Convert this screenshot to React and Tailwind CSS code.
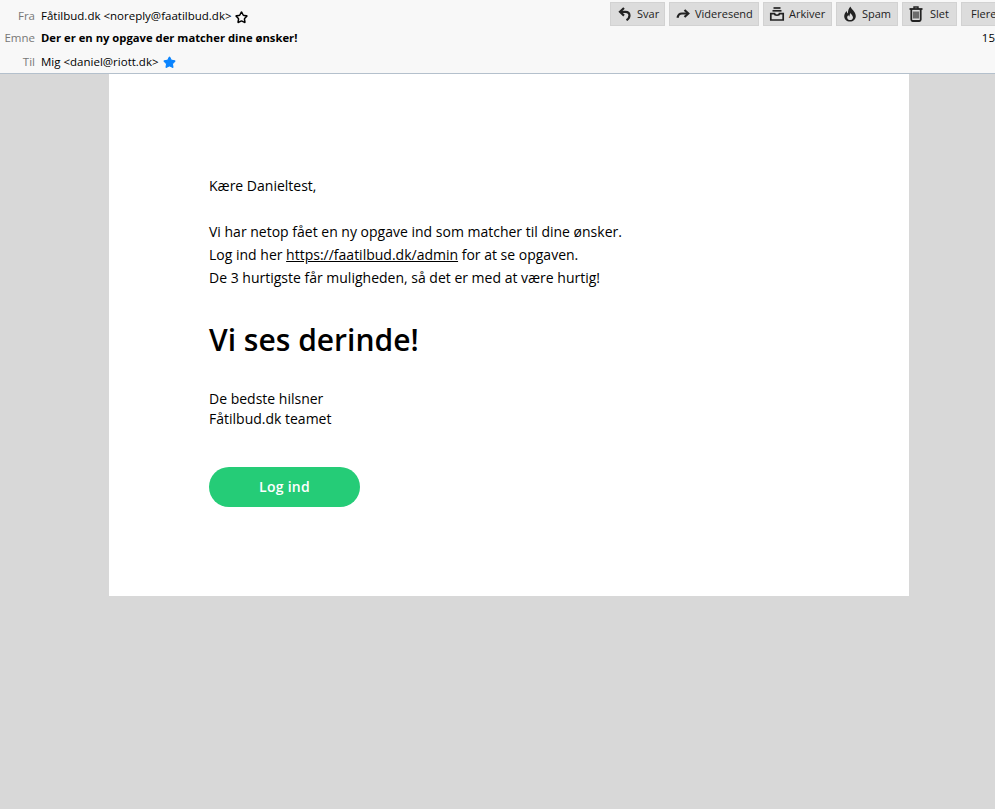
import React from 'react';
import { Star } from 'lucide-react';

function ReplyIcon() {
  return (
    <svg width="14" height="14" viewBox="0 0 14 14" fill="none" stroke="#222" strokeWidth="2.2">
      <path d="M6 1 L2 4.8 L6 8.6" />
      <path d="M2.5 4.8 H7.5 C10.5 4.8 11.5 6.8 11.5 8.6 C11.5 10.4 10.5 12 8.5 13.2" />
    </svg>
  );
}

function ForwardIcon() {
  return (
    <svg width="14" height="14" viewBox="0 0 14 14" fill="none" stroke="#222" strokeWidth="2.2">
      <path d="M8.5 3 L12.3 6.5 L8.5 10" />
      <path d="M12 6.5 H6 C3.5 6.5 2 8 1.5 10.8" />
    </svg>
  );
}

function ArchiveIcon() {
  return (
    <svg width="16" height="14" viewBox="0 0 16 14" fill="none" stroke="#222" strokeWidth="1.7">
      <path d="M4.5 1 H11.5" />
      <path d="M3.5 3.8 H12.5" />
      <path d="M1.8 6.6 H5.5 C5.5 8.8 10.5 8.8 10.5 6.6 H14.2 V13 H1.8 Z" />
    </svg>
  );
}

function FlameIcon() {
  return (
    <svg width="14" height="16" viewBox="0 0 14 16">
      <path fill="#222" d="M7.5 0.5 C8 3 12.8 5.5 12.8 10 C12.8 13.4 10.2 15.6 7 15.6 C3.6 15.6 1.2 13.2 1.2 10.2 C1.2 8 2.4 6.2 3.8 5 C3.8 6.2 4.2 7 5 7.6 C4.8 5 5.6 2.4 7.5 0.5 Z" />
      <path fill="#dcdcdc" d="M7.6 7 C8 8.6 10 9.6 10 11.4 C10 13 8.6 14 7 14 C5.4 14 4.2 12.8 4.2 11.4 C4.2 10.4 4.8 9.6 5.6 9.2 C5.8 10 6 10.4 6.4 10.6 C6.4 9.2 6.8 8 7.6 7 Z" />
    </svg>
  );
}

function TrashIcon() {
  return (
    <svg width="14" height="16" viewBox="0 0 14 16" fill="none" stroke="#222" strokeWidth="1.8">
      <path d="M0.5 3 H13.5" />
      <path d="M5 3 V1 H9 V3" strokeWidth="1.4" />
      <path d="M2.3 3 V13.6 C2.3 14.6 2.8 15 3.6 15 H10.4 C11.2 15 11.7 14.6 11.7 13.6 V3" />
      <path d="M5 5.5 V12.5 M7 5.5 V12.5 M9 5.5 V12.5" strokeWidth="1.2" />
    </svg>
  );
}

function ToolButton({ icon, label, className }) {
  return (
    <button className={`flex h-6 flex-none items-center bg-[#dcdcdc] border border-[#d2d2d2] text-[11px] text-[#222] ${className}`}>
      {icon}
      <span>{label}</span>
    </button>
  );
}

function HeaderRow({ label, className, children }) {
  return (
    <div className={`flex items-center ${className}`}>
      <span className="w-[35px] text-right text-[11.5px] text-[#777]">{label}</span>
      <div className="ml-[6px] flex items-center text-[11.5px] text-black whitespace-nowrap">{children}</div>
    </div>
  );
}

export default function App() {
  return (
    <div className="h-[809px] overflow-hidden bg-[#d8d8d8] font-['Open_Sans',sans-serif]">
      <header className="flex h-[74px] justify-between overflow-hidden border-b border-[#b4c0cc] bg-[#f8f8f8] pt-[5px]">
        <div>
          <HeaderRow label="Fra" className="h-[22px]">
            Fåtilbud.dk &lt;noreply@faatilbud.dk&gt;
            <Star size={13} strokeWidth={2.8} className="ml-[3px] mt-[2px] text-black" />
          </HeaderRow>
          <HeaderRow label="Emne" className="h-[22px]">
            <b className="text-[11.25px] font-bold">Der er en ny opgave der matcher dine ønsker!</b>
          </HeaderRow>
          <HeaderRow label="Til" className="h-[26px]">
            Mig &lt;daniel@riott.dk&gt;
            <Star size={13} fill="#0a84ff" className="ml-[4px] text-[#0a84ff]" />
          </HeaderRow>
        </div>
        <div className="w-[385px] shrink-0 -mt-[3px]">
          <div className="flex gap-1">
            <ToolButton className="w-[55px] gap-[5px] pl-[7px]" icon={<ReplyIcon />} label="Svar" />
            <ToolButton className="w-[90px] gap-[5px] pl-[6px]" icon={<ForwardIcon />} label="Videresend" />
            <ToolButton className="w-[69px] gap-[4px] pl-[5px]" icon={<ArchiveIcon />} label="Arkiver" />
            <ToolButton className="w-[62px] gap-[5px] pl-[6px]" icon={<FlameIcon />} label="Spam" />
            <ToolButton className="w-[55px] gap-[7px] pl-[6px]" icon={<TrashIcon />} label="Slet" />
            <ToolButton className="w-[50px] pl-[9px]" label="Flere" />
          </div>
          <div className="mt-[3px] text-right text-[11.5px] text-black">15</div>
        </div>
      </header>
      <main className="ml-[109px] h-[522px] w-[800px] bg-white px-[100px] pt-[100px] text-[14px] text-black">
        <p className="leading-[23px]">Kære Danieltest,</p>
        <p className="mt-[23px] leading-[23px]">
          Vi har netop fået en ny opgave ind som matcher til dine ønsker.<br />
          Log ind her <a href="#" className="underline">https://faatilbud.dk/admin</a> for at se opgaven.<br />
          De 3 hurtigste får muligheden, så det er med at være hurtig!
        </p>
        <h1 className="mt-[28px] text-[30px] font-semibold leading-[46px]">Vi ses derinde!</h1>
        <p className="mt-[26px] leading-[20px]">De bedste hilsner<br />Fåtilbud.dk teamet</p>
        <a href="#" className="mt-[38px] flex h-10 w-[151px] items-center justify-center rounded-full bg-[#25cc77] pb-[2px] font-semibold tracking-[0.25px] text-white">Log ind</a>
      </main>
    </div>
  );
}
